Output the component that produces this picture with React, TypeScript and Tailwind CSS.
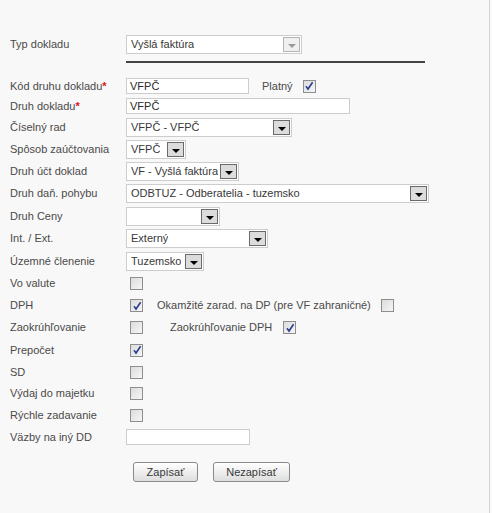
import React from 'react';

const font = { fontFamily: '"Liberation Sans", Arial, sans-serif' };

function Arrow({ disabled }: { disabled?: boolean }) {
  return (
    <span
      className={
        disabled
          ? 'flex h-[15px] w-[17px] shrink-0 items-end justify-center border border-[#b4b4b4] bg-[#efefef] pb-[3px]'
          : 'flex h-[15px] w-[17px] shrink-0 items-end justify-center border border-[#6a6a6a] bg-[#dcdcdc] pb-[3px]'
      }
    >
      <svg width="8" height="4" viewBox="0 0 8 4">
        <path d="M0 0h8L4 4z" fill={disabled ? '#9a9a9a' : '#000'} />
      </svg>
    </span>
  );
}

function Select({ value, width, disabled }: { value: string; width: number; disabled?: boolean }) {
  return (
    <div
      className="flex h-[19px] items-center justify-between border border-[#cdcdcd] bg-white pl-[4px] pr-[1px] text-[11px] text-[#383838]"
      style={{ width }}
    >
      <span className="truncate">{value}</span>
      <Arrow disabled={disabled} />
    </div>
  );
}

function TextInput({ value, width }: { value?: string; width: number }) {
  return (
    <div
      className="flex h-[16px] items-center border border-[#cdcdcd] bg-white pl-[3px] text-[11px] text-[#2a2a2a]"
      style={{ width }}
    >
      {value}
    </div>
  );
}

function Check({ checked }: { checked?: boolean }) {
  return (
    <span className="flex h-[13px] w-[13px] shrink-0 items-center justify-center border border-[#8e8e8e] bg-gradient-to-br from-[#dcdcdc] to-[#f6f6f6]">
      {checked && (
        <svg width="10" height="10" viewBox="0 0 10 10">
          <path d="M2 5.2 4 8 8.6 1.2" fill="none" stroke="#2a3f94" strokeWidth="1.6" />
        </svg>
      )}
    </span>
  );
}

function Row({ label, req, h, children }: { label: string; req?: boolean; h: number; children?: React.ReactNode }) {
  return (
    <div className="flex items-center" style={{ height: h }}>
      <div className="w-[116px] shrink-0 text-[11px] text-[#4a4a4a]">
        {label}
        {req && <span className="font-bold text-[#d11]">*</span>}
      </div>
      <div className="flex items-center">{children}</div>
    </div>
  );
}

export default function App() {
  return (
    <div className="h-[513px] w-[492px] bg-[#f8f8f8]" style={font}>
      <div className="h-full w-[490px] border-r border-[#d4d4d4] pl-[10px] pt-[33px]">
        <Row label="Typ dokladu" h={22}>
          <Select value="Vyšlá faktúra" width={176} disabled />
        </Row>
        <div className="ml-[116px] mt-[6px] h-[2px] w-[299px] bg-[#444]" />

        <div className="mt-[13px]">
          <Row label="Kód druhu dokladu" req h={20}>
            <TextInput value="VFPČ" width={123} />
            <span className="ml-[13px] text-[11px] text-[#4a4a4a]">Platný</span>
            <span className="ml-[10px]">
              <Check checked />
            </span>
          </Row>
          <Row label="Druh dokladu" req h={20}>
            <TextInput value="VFPČ" width={224} />
          </Row>
          <Row label="Číselný rad" h={22}>
            <Select value="VFPČ - VFPČ" width={166} />
          </Row>
          <Row label="Spôsob zaúčtovania" h={23}>
            <Select value="VFPČ" width={60} />
          </Row>
          <Row label="Druh účt doklad" h={21}>
            <Select value="VF - Vyšlá faktúra" width={113} />
          </Row>
          <Row label="Druh daň. pohybu" h={23}>
            <Select value="ODBTUZ - Odberatelia - tuzemsko" width={303} />
          </Row>
          <Row label="Druh Ceny" h={22}>
            <Select value="" width={94} />
          </Row>
          <Row label="Int. / Ext." h={23}>
            <Select value="Externý" width={142} />
          </Row>
          <Row label="Územné členenie" h={22}>
            <Select value="Tuzemsko" width={78} />
          </Row>
          <Row label="Vo valute" h={23}>
            <span className="ml-[4px]">
              <Check />
            </span>
          </Row>
          <Row label="DPH" h={21}>
            <span className="ml-[4px]">
              <Check checked />
            </span>
            <span className="ml-[14px] text-[11px] text-[#4a4a4a]">Okamžité zarad. na DP (pre VF zahraničné)</span>
            <span className="ml-[10px]">
              <Check />
            </span>
          </Row>
          <Row label="Zaokrúhľovanie" h={23}>
            <span className="ml-[4px]">
              <Check />
            </span>
            <span className="ml-[27px] text-[11px] text-[#4a4a4a]">Zaokrúhľovanie DPH</span>
            <span className="ml-[11px]">
              <Check checked />
            </span>
          </Row>
          <Row label="Prepočet" h={22}>
            <span className="ml-[4px]">
              <Check checked />
            </span>
          </Row>
          <Row label="SD" h={22}>
            <span className="ml-[4px]">
              <Check />
            </span>
          </Row>
          <Row label="Výdaj do majetku" h={21}>
            <span className="ml-[4px]">
              <Check />
            </span>
          </Row>
          <Row label="Rýchle zadavanie" h={22}>
            <span className="ml-[4px]">
              <Check />
            </span>
          </Row>
          <Row label="Väzby na iný DD" h={22}>
            <TextInput width={124} />
          </Row>
        </div>

        <div className="ml-[123px] mt-[14px] flex gap-[15px]">
          <button className="h-[20px] w-[65px] rounded-[3px] border border-[#8a8a8a] bg-gradient-to-b from-white to-[#dedede] text-[11px] text-[#383838]">
            Zapísať
          </button>
          <button className="h-[20px] w-[77px] rounded-[3px] border border-[#8a8a8a] bg-gradient-to-b from-white to-[#dedede] text-[11px] text-[#383838]">
            Nezapísať
          </button>
        </div>
      </div>
    </div>
  );
}
